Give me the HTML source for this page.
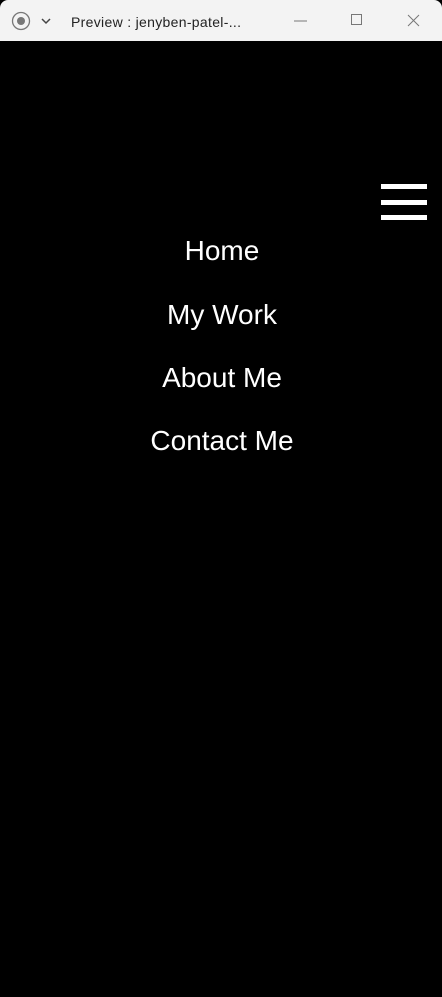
<!DOCTYPE html>
<html><head><style>
html,body{margin:0;padding:0;}
body{width:442px;height:997px;background:#000;position:relative;overflow:hidden;font-family:"Liberation Sans",sans-serif;}
.tb{position:absolute;left:0;top:0;width:442px;height:41px;background:#f3f3f3;border-radius:8px 8px 0 0;}
.t{position:absolute;color:#fff;font-size:28px;left:0;width:444px;text-align:center;line-height:28px;}
.bar{position:absolute;left:381px;width:46px;height:5px;background:#fff;}
</style></head><body>
<div class="tb">
<svg width="442" height="41" style="position:absolute;left:0;top:0">
<circle cx="21" cy="21" r="8.5" fill="none" stroke="#777" stroke-width="1.3"/>
<circle cx="21" cy="21" r="4" fill="#777"/>
<path d="M42 19 L46 23 L50 19" fill="none" stroke="#444" stroke-width="1.5"/>
<line x1="294" y1="21" x2="307" y2="21" stroke="#777" stroke-width="1"/>
<rect x="351.5" y="14.5" width="10" height="10" fill="none" stroke="#777" stroke-width="1"/>
<path d="M408 15 L419 26 M419 15 L408 26" stroke="#777" stroke-width="1"/>
<text x="71" y="27" font-family="Liberation Sans, sans-serif" font-size="14" fill="#222" textLength="170">Preview : jenyben-patel-...</text>
</svg>
</div>
<div class="bar" style="top:184px"></div>
<div class="bar" style="top:200px"></div>
<div class="bar" style="top:215px"></div>
<div class="t" style="top:237px">Home</div>
<div class="t" style="top:301px">My Work</div>
<div class="t" style="top:364px">About Me</div>
<div class="t" style="top:427px">Contact Me</div>
</body></html>
